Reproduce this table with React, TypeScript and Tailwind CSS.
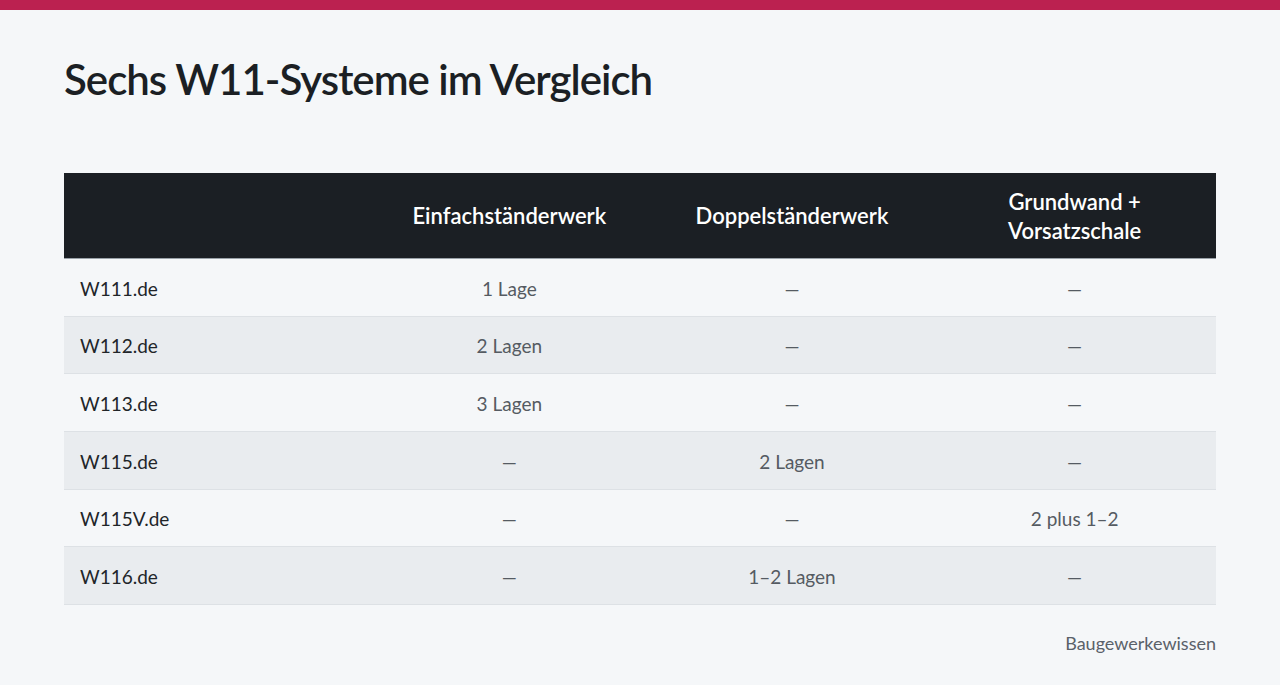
import React from "react";

const rows: [string, string, string, string][] = [
  ["W111.de", "1 Lage", "—", "—"],
  ["W112.de", "2 Lagen", "—", "—"],
  ["W113.de", "3 Lagen", "—", "—"],
  ["W115.de", "—", "2 Lagen", "—"],
  ["W115V.de", "—", "—", "2 plus 1–2"],
  ["W116.de", "—", "1–2 Lagen", "—"],
];

export default function App() {
  return (
    <div
      className="min-h-[685px] w-full bg-[#f5f7f9] flex flex-col"
      style={{ fontFamily: "Lato, 'Noto Sans', sans-serif" }}
    >
      <div className="h-[10px] bg-[#bb2150]" />
      <div className="px-16 flex flex-col">
        <h1 className="mt-[47px] text-[42px] leading-[44px] font-semibold text-[#1b1f24] tracking-[-1px]">
          Sechs W11-Systeme im Vergleich
        </h1>
        <div className="mt-[72px] flex flex-col">
          <div className="grid grid-cols-[304px_1fr_1fr_1fr] h-[86px] bg-[#1b1f24] border-b border-[#9aa1a8] items-center text-white text-[22px] font-semibold leading-[29px]">
            <div />
            <div className="text-center">Einfachständerwerk</div>
            <div className="text-center">Doppelständerwerk</div>
            <div className="text-center">
              Grundwand +
              <br />
              Vorsatzschale
            </div>
          </div>
          {rows.map((r, i) => (
            <div
              key={r[0]}
              className={
                "grid grid-cols-[304px_1fr_1fr_1fr] h-[57.67px] pt-[3px] items-center border-b border-[#dde1e5] text-[19px] " +
                (i % 2 === 1 ? "bg-[#e9ecef]" : "bg-[#f5f7f9]")
              }
            >
              <div className="pl-4 text-[#212529]">{r[0]}</div>
              <div className="text-center text-[#555b62]">{r[1]}</div>
              <div className="text-center text-[#555b62]">{r[2]}</div>
              <div className="text-center text-[#555b62]">{r[3]}</div>
            </div>
          ))}
        </div>
        <div className="mt-[25px] text-right text-[18px] text-[#5a6169]">Baugewerkewissen</div>
      </div>
    </div>
  );
}
